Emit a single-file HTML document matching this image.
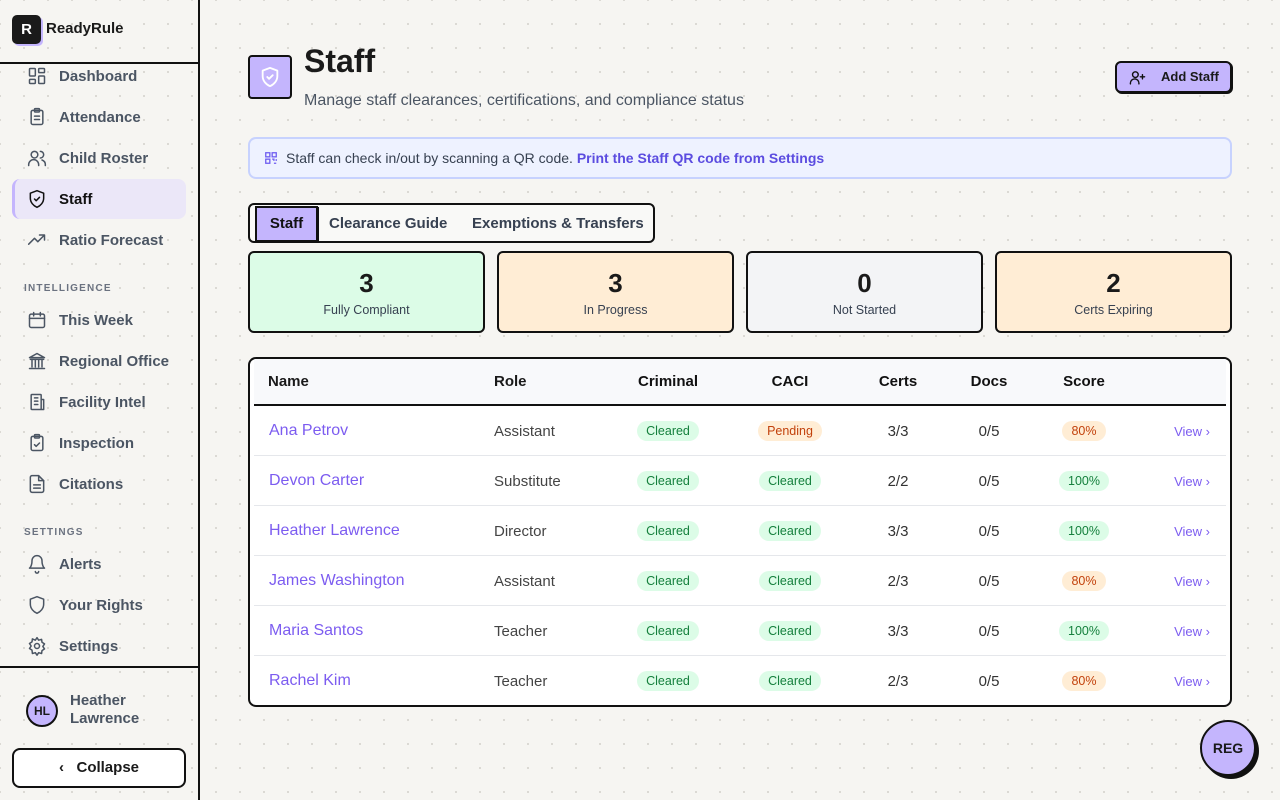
<!DOCTYPE html>
<html><head><meta charset="utf-8"><style>
*{box-sizing:border-box;margin:0;padding:0}
body{width:1280px;height:800px;overflow:hidden;font-family:"Liberation Sans",sans-serif;background:#f6f5f2;background-image:radial-gradient(#d9d7d2 1px,transparent 1.2px);background-size:24px 24px;background-position:12px 12px;color:#1a1a1a;position:relative}
.sb{position:absolute;left:0;top:0;width:200px;height:800px;border-right:2px solid #111}
.logo{position:absolute;left:12px;top:15px;width:29px;height:29px;background:#1a1a1a;border-radius:5px;color:#fff;font-weight:bold;font-size:15px;text-align:center;line-height:29px;box-shadow:2px 2px 0 #c4b5fd}
.brand{position:absolute;left:46px;top:20px;font-weight:bold;font-size:15px}
.hr{position:absolute;left:0;width:198px;height:2px;background:#111}
.nav{position:absolute;left:12px;width:174px;height:40px;display:flex;align-items:center;padding-left:15px;font-size:15px;font-weight:bold;color:#4b5563}
.nav svg{width:20px;height:20px;margin-right:12px;fill:none;stroke:#4b5563;stroke-width:1.8;stroke-linecap:round;stroke-linejoin:round}
.nav.act{background:#ebe7f8;border-radius:8px;border-left:3px solid #c4b5fd;color:#111;padding-left:12px}
.nav.act svg{stroke:#111}
.sec{position:absolute;left:24px;font-size:10px;letter-spacing:1.2px;color:#6b7280;font-weight:bold}
.main{position:absolute;left:248px;width:984px}
.badge{display:inline-block;padding:3px 9px;border-radius:10px;font-size:12.5px}
.g{background:#dcfce7;color:#15803d}.o{background:#ffedd5;color:#c2410c}
table{border-collapse:collapse;width:100%;table-layout:fixed}
td,th{height:50px;font-size:15px;padding-top:2px}
th{height:46px;font-weight:bold;text-align:left;padding-top:0}
tbody tr{border-top:1px solid #e5e7eb}
tbody tr:first-child{border-top:none}
.nm{color:#7c5cf0;font-size:16px}
.c{text-align:center;color:#333}
.v{color:#7c5cf0;font-size:13px;text-align:right;padding-right:16px}
</style></head><body>
<div class="sb">
<div class="logo">R</div><div class="brand">ReadyRule</div>
<div class="hr" style="top:62px"></div>
<div class="nav" style="top:56px"><svg viewBox="0 0 24 24"><rect x="3" y="3" width="7" height="9" rx="1"/><rect x="14" y="3" width="7" height="5" rx="1"/><rect x="14" y="12" width="7" height="9" rx="1"/><rect x="3" y="16" width="7" height="5" rx="1"/></svg>Dashboard</div>
<div class="nav" style="top:97px"><svg viewBox="0 0 24 24"><rect x="5" y="4" width="14" height="17" rx="2"/><rect x="9" y="2" width="6" height="4" rx="1"/><path d="M9 11h6M9 15h6"/></svg>Attendance</div>
<div class="nav" style="top:138px"><svg viewBox="0 0 24 24"><circle cx="9" cy="8" r="4"/><path d="M2 21v-1a6 6 0 0 1 12 0v1M16 4a4 4 0 0 1 0 8M22 21v-1a6 6 0 0 0-4-5.6"/></svg>Child Roster</div>
<div class="nav act" style="top:179px"><svg viewBox="0 0 24 24"><path d="M12 2l8 3v6c0 5-3.5 9-8 11-4.5-2-8-6-8-11V5z"/><path d="M9 12l2 2 4-4"/></svg>Staff</div>
<div class="nav" style="top:220px"><svg viewBox="0 0 24 24"><path d="M2 17l7-7 4 4 8-8M15 6h6v6"/></svg>Ratio Forecast</div>
<div class="sec" style="top:283px">INTELLIGENCE</div>
<div class="nav" style="top:300px"><svg viewBox="0 0 24 24"><rect x="3" y="5" width="18" height="16" rx="2"/><path d="M3 10h18M8 3v4M16 3v4"/></svg>This Week</div>
<div class="nav" style="top:341px"><svg viewBox="0 0 24 24"><path d="M3 21h18M4 10h16M12 3l9 5H3zM6 10v9M10 10v9M14 10v9M18 10v9"/></svg>Regional Office</div>
<div class="nav" style="top:382px"><svg viewBox="0 0 24 24"><rect x="5" y="3" width="12" height="18" rx="1"/><path d="M17 9h3v12h-3M9 7h4M9 11h4M9 15h4"/></svg>Facility Intel</div>
<div class="nav" style="top:423px"><svg viewBox="0 0 24 24"><rect x="5" y="4" width="14" height="17" rx="2"/><rect x="9" y="2" width="6" height="4" rx="1"/><path d="M9 14l2 2 4-4"/></svg>Inspection</div>
<div class="nav" style="top:464px"><svg viewBox="0 0 24 24"><path d="M14 2H6a2 2 0 0 0-2 2v16a2 2 0 0 0 2 2h12a2 2 0 0 0 2-2V8z"/><path d="M14 2v6h6M8 13h8M8 17h8"/></svg>Citations</div>
<div class="sec" style="top:527px">SETTINGS</div>
<div class="nav" style="top:544px"><svg viewBox="0 0 24 24"><path d="M6 8a6 6 0 0 1 12 0c0 7 3 9 3 9H3s3-2 3-9M10 21a2 2 0 0 0 4 0"/></svg>Alerts</div>
<div class="nav" style="top:585px"><svg viewBox="0 0 24 24"><path d="M12 2l8 3v6c0 5-3.5 9-8 11-4.5-2-8-6-8-11V5z"/></svg>Your Rights</div>
<div class="nav" style="top:626px"><svg viewBox="0 0 24 24"><circle cx="12" cy="12" r="3"/><path d="M12 2l2 3 3.5-1 .5 3.5 3 2-2 3 2 3-3 2-.5 3.5-3.5-1-2 3-2-3-3.5 1L6 17l-3-2 2-3-2-3 3-2 .5-3.5L10 5z"/></svg>Settings</div>
<div class="hr" style="top:666px"></div>
<div style="position:absolute;left:26px;top:695px;width:32px;height:32px;border-radius:50%;background:#c4b5fd;border:2px solid #111;font-size:12px;font-weight:bold;text-align:center;line-height:28px">HL</div>
<div style="position:absolute;left:70px;top:692px;font-size:15px;font-weight:bold;color:#4b5563;line-height:18px">Heather<br>Lawrence</div>
<div style="position:absolute;left:12px;top:748px;width:174px;height:40px;background:#fff;border:2px solid #111;border-radius:8px;text-align:center;line-height:36px;font-size:15px;font-weight:bold">‹&nbsp;&nbsp; Collapse</div>
</div>

<div style="position:absolute;left:248px;top:55px;width:44px;height:44px;background:#c4b5fd;border:2px solid #111;border-radius:4px"><svg viewBox="0 0 24 24" width="22" height="22" style="margin:9px" fill="none" stroke="#fff" stroke-width="2" stroke-linecap="round" stroke-linejoin="round"><path d="M12 2l8 3v6c0 5-3.5 9-8 11-4.5-2-8-6-8-11V5z"/><path d="M9 12l2 2 4-4"/></svg></div>
<div style="position:absolute;left:304px;top:43px;font-size:32px;font-weight:bold">Staff</div>
<div style="position:absolute;left:304px;top:92px;font-size:16px;color:#4b5563">Manage staff clearances, certifications, and compliance status</div>
<div style="position:absolute;left:1115px;top:61px;width:117px;height:32px;background:#c4b5fd;border:2px solid #111;border-radius:6px;box-shadow:1px 1px 0 #111;font-size:13px;font-weight:bold;line-height:28px;padding-left:44px"><svg viewBox="0 0 24 24" width="17" height="17" style="position:absolute;left:12px;top:6px" fill="none" stroke="#111" stroke-width="2" stroke-linecap="round"><circle cx="9" cy="8" r="4"/><path d="M2 21v-1a6 6 0 0 1 12 0v1M19 8v6M16 11h6"/></svg>Add Staff</div>

<div class="main" style="top:137px;height:42px;background:#eef2ff;border:2px solid #c7d2fe;border-radius:8px;font-size:14px;color:#374151;line-height:38px;padding-left:36px"><svg viewBox="0 0 24 24" width="14" height="14" style="position:absolute;left:14px;top:12px" fill="none" stroke="#6d5cf0" stroke-width="2.2"><rect x="3" y="3" width="7" height="7"/><rect x="14" y="3" width="7" height="7"/><rect x="3" y="14" width="7" height="7"/><path d="M14 14h3v3M21 21h-4M21 14v3"/></svg>Staff can check in/out by scanning a QR code. <b style="color:#5b4ce0">Print the Staff QR code from Settings</b></div>

<div style="position:absolute;left:248px;top:203px;width:407px;height:40px;border:2px solid #111;border-radius:6px;background:#f9f9f7;font-size:15px;font-weight:bold;color:#374151">
<div style="position:absolute;left:5px;top:1px;width:63px;height:36px;background:#c4b5fd;border:2px solid #111;color:#111;text-align:center;line-height:32px;box-shadow:1px 1px 0 #111">Staff</div>
<span style="position:absolute;left:79px;top:10px">Clearance Guide</span>
<span style="position:absolute;left:222px;top:10px">Exemptions &amp; Transfers</span>
</div>

<div style="position:absolute;top:251px;left:248px;width:984px;height:82px;display:flex;gap:12px">
<div style="flex:1;background:#dcfce7;border:2px solid #111;border-radius:6px;text-align:center"><div style="font-size:26px;font-weight:bold;margin-top:15px">3</div><div style="font-size:12.5px;color:#374151;margin-top:4px">Fully Compliant</div></div>
<div style="flex:1;background:#ffedd5;border:2px solid #111;border-radius:6px;text-align:center"><div style="font-size:26px;font-weight:bold;margin-top:15px">3</div><div style="font-size:12.5px;color:#374151;margin-top:4px">In Progress</div></div>
<div style="flex:1;background:#f3f4f6;border:2px solid #111;border-radius:6px;text-align:center"><div style="font-size:26px;font-weight:bold;margin-top:15px">0</div><div style="font-size:12.5px;color:#374151;margin-top:4px">Not Started</div></div>
<div style="flex:1;background:#ffedd5;border:2px solid #111;border-radius:6px;text-align:center"><div style="font-size:26px;font-weight:bold;margin-top:15px">2</div><div style="font-size:12.5px;color:#374151;margin-top:4px">Certs Expiring</div></div>
</div>

<div class="main" style="top:357px;height:350px;background:#fff;border:2px solid #111;border-radius:8px;overflow:hidden;padding:0 4px">
<table>
<colgroup><col style="width:240px"><col style="width:119px"><col style="width:110px"><col style="width:134px"><col style="width:82px"><col style="width:100px"><col style="width:90px"><col></colgroup>
<thead style="background:#f8f9fb;border-bottom:2px solid #111"><tr><th style="padding-left:14px">Name</th><th>Role</th><th class="c" style="color:#111">Criminal</th><th class="c" style="color:#111">CACI</th><th class="c" style="color:#111">Certs</th><th class="c" style="color:#111">Docs</th><th class="c" style="color:#111">Score</th><th></th></tr></thead>
<tbody>
<tr><td class="nm" style="padding-left:15px">Ana Petrov</td><td style="color:#444">Assistant</td><td class="c"><span class="badge g">Cleared</span></td><td class="c"><span class="badge o">Pending</span></td><td class="c">3/3</td><td class="c">0/5</td><td class="c"><span class="badge o">80%</span></td><td class="v">View ›</td></tr>
<tr><td class="nm" style="padding-left:15px">Devon Carter</td><td style="color:#444">Substitute</td><td class="c"><span class="badge g">Cleared</span></td><td class="c"><span class="badge g">Cleared</span></td><td class="c">2/2</td><td class="c">0/5</td><td class="c"><span class="badge g">100%</span></td><td class="v">View ›</td></tr>
<tr><td class="nm" style="padding-left:15px">Heather Lawrence</td><td style="color:#444">Director</td><td class="c"><span class="badge g">Cleared</span></td><td class="c"><span class="badge g">Cleared</span></td><td class="c">3/3</td><td class="c">0/5</td><td class="c"><span class="badge g">100%</span></td><td class="v">View ›</td></tr>
<tr><td class="nm" style="padding-left:15px">James Washington</td><td style="color:#444">Assistant</td><td class="c"><span class="badge g">Cleared</span></td><td class="c"><span class="badge g">Cleared</span></td><td class="c">2/3</td><td class="c">0/5</td><td class="c"><span class="badge o">80%</span></td><td class="v">View ›</td></tr>
<tr><td class="nm" style="padding-left:15px">Maria Santos</td><td style="color:#444">Teacher</td><td class="c"><span class="badge g">Cleared</span></td><td class="c"><span class="badge g">Cleared</span></td><td class="c">3/3</td><td class="c">0/5</td><td class="c"><span class="badge g">100%</span></td><td class="v">View ›</td></tr>
<tr><td class="nm" style="padding-left:15px">Rachel Kim</td><td style="color:#444">Teacher</td><td class="c"><span class="badge g">Cleared</span></td><td class="c"><span class="badge g">Cleared</span></td><td class="c">2/3</td><td class="c">0/5</td><td class="c"><span class="badge o">80%</span></td><td class="v">View ›</td></tr>
</tbody></table></div>

<div style="position:absolute;left:1200px;top:720px;width:56px;height:56px;border-radius:50%;background:#c4b5fd;border:2px solid #111;box-shadow:3px 3px 0 #111;text-align:center;line-height:52px;font-weight:bold;font-size:14px">REG</div>
</body></html>
